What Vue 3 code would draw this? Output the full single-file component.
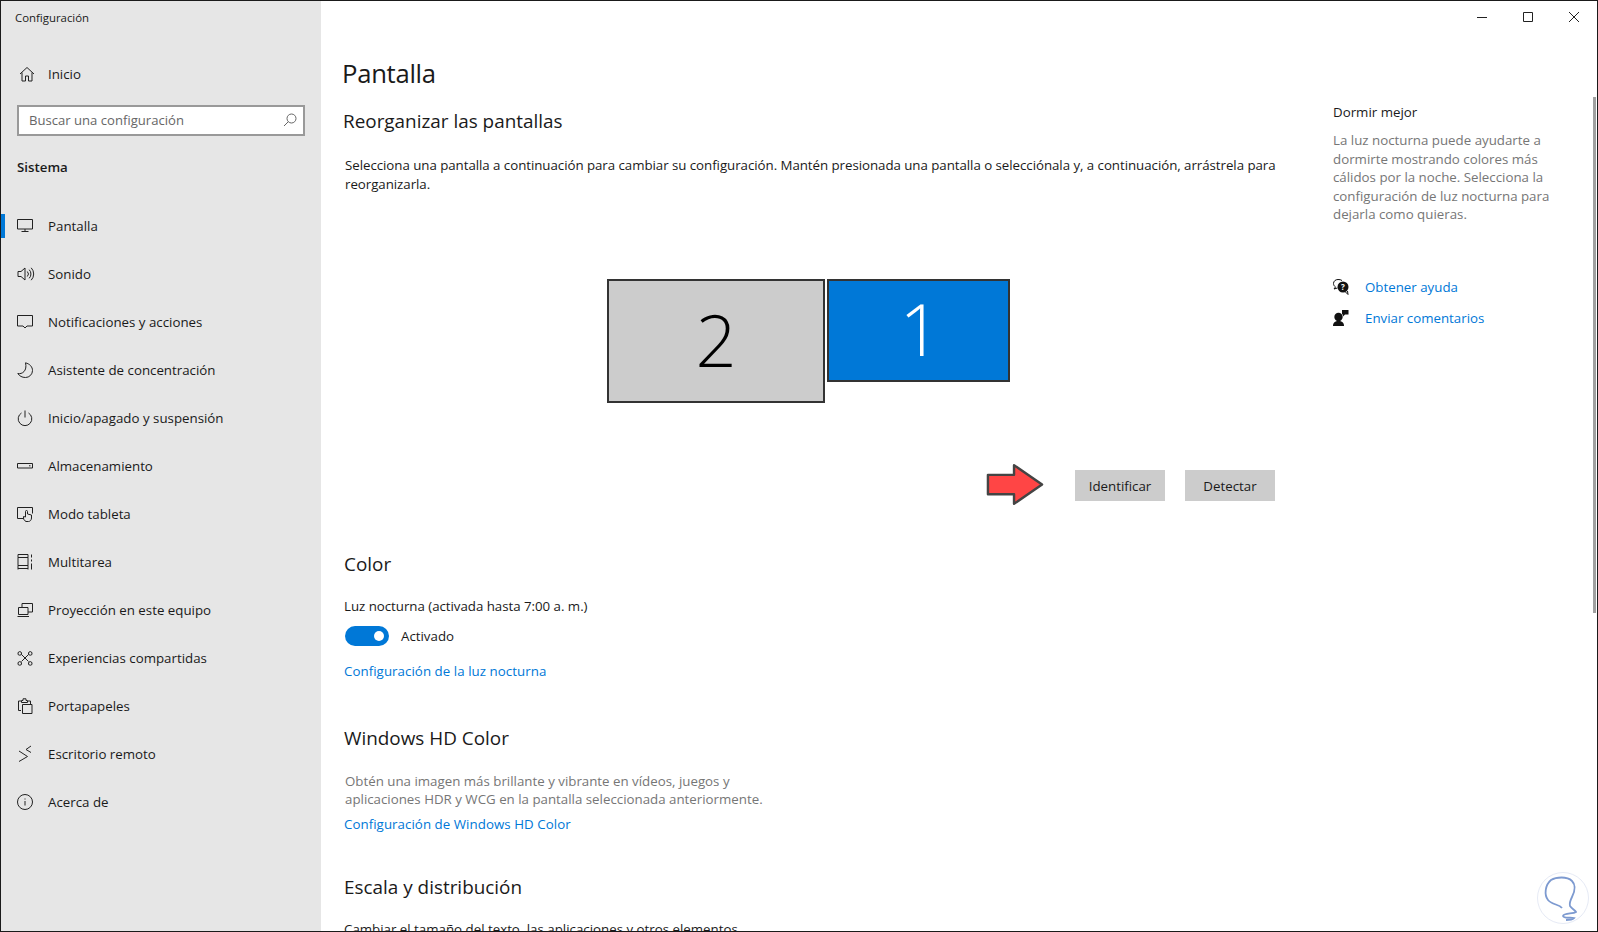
<script setup>
const items = [
  { label: 'Pantalla', active: true, d: 'M.5 1.5h15v9.5H.5z M8 11v2.5 M4.5 13.5h7' },
  { label: 'Sonido', d: 'M1 5.5h3L8 2v12l-4-3.5H1z M10.3 5.5a3.6 3.6 0 0 1 0 5 M12.2 3.7a6.2 6.2 0 0 1 0 8.6 M14.2 1.8a9 9 0 0 1 0 12.4' },
  { label: 'Notificaciones y acciones', d: 'M.5 1.5h15v10.5H10l-2 2-2-2H.5z' },
  { label: 'Asistente de concentración', d: 'M8.5.8C13 2 15.5 5 15.5 8.5a7 7 0 0 1-7 7C5 15.500 2.500 14 .8 11.500 5 12.500 10.500 9 8.500.8z' },
  { label: 'Inicio/apagado y suspensión', d: 'M8 .5v7 M4.500 3a6.800 6.800 0 1 0 7 0' },
  { label: 'Almacenamiento', d: 'M.5 5.500h15v4.500H.5z M12 7.800h1.500' },
  { label: 'Modo tableta', d: 'M6.500 12.500H.5V1.500h15v6 M9 15.500c-1.500-.8-2.500-2-2.500-3.500v-1.500l2 .5V5.500a1 1 0 0 1 2 0V8l4 1v3c0 2-1.500 3.500-3 3.500z' },
  { label: 'Multitarea', d: 'M1 .5h10 M1 3.500h10v8H1z M1 14.500h10 M1 11.500v4 M11 11.500v4 M1 .5v3 M11 .5v3 M14.500.5v3 M14.500 5.500v2 M14.500 9.500v6' },
  { label: 'Proyección en este equipo', d: 'M5 5V1.500h10.500V10H11 M1.500 5.500H11v7H1.500z M.5 14.500h11.500' },
  { label: 'Experiencias compartidas', d: 'M4.500 4.500l7 7 M11.500 4.500l-7 7 M4.500 3a1.800 1.800 0 1 1-3.500 0 1.800 1.800 0 0 1 3.500 0z M15 3a1.800 1.800 0 1 1-3.500 0 1.800 1.800 0 0 1 3.500 0z M4.500 13a1.800 1.800 0 1 1-3.500 0 1.800 1.800 0 0 1 3.500 0z M15 13a1.800 1.800 0 1 1-3.500 0 1.800 1.800 0 0 1 3.500 0z' },
  { label: 'Portapapeles', d: 'M4 12.500H1.500V3H4 M11 3h2.500v3 M4.500 4.500V2.500H6V.8h3v1.700h1.500v2z M5.500 6.500h9.500v9H5.500z' },
  { label: 'Escritorio remoto', d: 'M2 5l8.500 5.500L2 15.500 M14 0L9 3.500 14 6.500' },
  { label: 'Acerca de', d: 'M15.500 8a7.500 7.500 0 1 1-15 0 7.500 7.500 0 0 1 15 0z M8 7v4.500 M8 4.500v1' },
];
const monitors = [
  { n: 2, cls: 'mon-two' },
  { n: 1, cls: 'mon-one' },
];
</script>

<template>
  <div class="window">
    <aside class="side">
      <div class="app-title">Configuración</div>
      <div class="row home">
        <svg class="ico" viewBox="0 0 16 16"><path d="M1 8l7-6.500L15 8 M3 6.500v8.500h3.500v-5h3v5H13V6.500" /></svg>
        <span class="lab">Inicio</span>
      </div>
      <div class="search">
        <span>Buscar una configuración</span>
        <svg class="sico" viewBox="0 0 14 14"><path d="M13 5.500a4.500 4.500 0 1 1-9 0 4.500 4.500 0 0 1 9 0z M5.300 8.700L1 13" /></svg>
      </div>
      <div class="sys">Sistema</div>
      <nav class="nav">
        <div v-for="it in items" :key="it.label" class="row" :class="{ active: it.active }">
          <svg class="ico" viewBox="0 0 16 16"><path :d="it.d" /></svg>
          <span class="lab">{{ it.label }}</span>
        </div>
      </nav>
    </aside>

    <main class="main">
      <div class="controls">
        <svg viewBox="0 0 12 12"><path d="M1 6.500h10" /></svg>
        <svg viewBox="0 0 12 12"><path d="M1.500 1.500h9v9h-9z" /></svg>
        <svg viewBox="0 0 12 12"><path d="M1 1l10 10 M11 1L1 11" /></svg>
      </div>
      <div class="body">
        <section class="content">
          <h1>Pantalla</h1>
          <h2 class="h-reorg">Reorganizar las pantallas</h2>
          <p class="intro">Selecciona una pantalla a continuación para cambiar su configuración. Mantén presionada una pantalla o selecciónala y, a continuación, arrástrela para<br />reorganizarla.</p>
          <div class="monitors">
            <div v-for="m in monitors" :key="m.n" class="mon" :class="m.cls">{{ m.n }}</div>
          </div>
          <div class="btns">
            <svg class="arrow" viewBox="0 0 60 44"><path d="M2 12h27V2l29 20-29 20V32H2z" /></svg>
            <button class="btn">Identificar</button>
            <button class="btn">Detectar</button>
          </div>
          <h2 class="h-color">Color</h2>
          <div class="night">Luz nocturna (activada hasta 7:00 a. m.)</div>
          <div class="toggle-row">
            <span class="toggle"><i></i></span>
            <span>Activado</span>
          </div>
          <a class="link link-night">Configuración de la luz nocturna</a>
          <h2 class="h-hd">Windows HD Color</h2>
          <p class="hd-text">Obtén una imagen más brillante y vibrante en vídeos, juegos y<br />aplicaciones HDR y WCG en la pantalla seleccionada anteriormente.</p>
          <a class="link link-hd">Configuración de Windows HD Color</a>
          <h2 class="h-scale">Escala y distribución</h2>
          <div class="scale-text">Cambiar el tamaño del texto, las aplicaciones y otros elementos</div>
        </section>
        <aside class="help">
          <div class="help-title">Dormir mejor</div>
          <p class="help-text">La luz nocturna puede ayudarte a dormirte mostrando colores más cálidos por la noche. Selecciona la configuración de luz nocturna para dejarla como quieras.</p>
          <div class="help-links">
            <div class="hl">
              <svg viewBox="0 0 16 16" class="hico">
                <path class="ol" d="M9 1.500C8 .7 6.500.5 5 .5 2.500.5.500 2.200.5 4.500c0 1.500.8 2.700 2 3.400L1 10l3.500-1" />
                <circle cx="10" cy="8" r="5.500" />
                <path class="ol" d="M12.500 13l2.500 2.500-.5-3.500" />
                <text x="10" y="11" class="q">?</text>
              </svg>
              <a class="link">Obtener ayuda</a>
            </div>
            <div class="hl">
              <svg viewBox="0 0 16 16" class="hico">
                <circle cx="5.500" cy="7" r="4.200" />
                <path d="M0 16c0-3.500 2-5 5.500-5s5.500 1.500 5.500 5z" />
                <path d="M9 0h6.500v4.500H12L10 6.500V4.500H9z" />
              </svg>
              <a class="link">Enviar comentarios</a>
            </div>
          </div>
        </aside>
      </div>
      <div class="scrollbar"></div>
      <svg class="mark" viewBox="0 0 52 52">
        <circle class="mark-ring" cx="26" cy="26" r="25.500" />
        <path class="mark-bulb" d="M25 36C22 32 15 33 11 28 7 23 8 13 14 8 19 5 30 4 35 9 40 14 37 21 35 25 33 29 32 31 33 34 35 37 38 38 39 40 36 42 27 41 26 44 27 47 33 45 37 46 35 48 31 48 29 48" />
      </svg>
    </main>
  </div>
</template>

<style>
html, body { margin: 0; background: #fff; }
</style>

<style scoped>
.window {
  box-sizing: border-box;
  width: 1598px;
  height: 932px;
  display: flex;
  overflow: hidden;
  position: relative;
  border: 1px solid #1a1a1a;
  background: #fff;
  color: #1a1a1a;
  font-family: "Open Sans", "Noto Sans", sans-serif;
  font-size: 13.3px;
}
.side {
  width: 320px;
  flex: none;
  background: #e6e6e6;
  box-sizing: border-box;
}
.app-title {
  height: 49px;
  padding: 9px 0 0 14px;
  box-sizing: border-box;
  font-size: 11.4px;
  line-height: 16px;
}
.row {
  height: 48px;
  display: flex;
  align-items: center;
  padding-left: 16px;
  position: relative;
}
.row.active::before {
  content: "";
  position: absolute;
  left: 0;
  top: 12px;
  width: 4px;
  height: 24px;
  background: #0078d7;
}
.ico {
  width: 16px;
  height: 16px;
  flex: none;
  overflow: visible;
}
.ico path {
  fill: none;
  stroke: #222;
  stroke-width: 1;
}
.lab {
  margin-left: 15px;
  white-space: nowrap;
}
.home .ico { margin-left: 2px; }
.home .lab { margin-left: 13px; }
.search {
  box-sizing: border-box;
  margin: 7px 0 0 16px;
  width: 288px;
  height: 31px;
  border: 2px solid #999;
  background: #fff;
  color: #666;
  font-size: 13.1px;
  display: flex;
  align-items: center;
  justify-content: space-between;
  padding: 0 6px 2px 10px;
}
.sico {
  width: 14px;
  height: 14px;
  fill: none;
  stroke: #666;
}
.sys {
  margin: 16px 0 0 16px;
  height: 30px;
  line-height: 30px;
  font-weight: 600;
}
.nav { margin-top: 20px; }
.main {
  flex: 1;
  min-width: 0;
  position: relative;
  display: flex;
  flex-direction: column;
}
.controls {
  height: 34px;
  flex: none;
  display: flex;
  justify-content: flex-end;
  align-items: center;
  gap: 34px;
  padding-right: 17px;
  box-sizing: border-box;
  padding-bottom: 2px;
}
.controls svg {
  width: 12px;
  height: 12px;
  fill: none;
  stroke: #222;
}
.body {
  display: flex;
  flex: 1;
  min-height: 0;
}
.content {
  width: 932px;
  margin-left: 22px;
  flex: none;
}
h1 {
  margin: 19px 0 0 -1px;
  font-size: 25.7px;
  font-weight: 400;
  line-height: 40px;
  letter-spacing: -0.3px;
}
h2 {
  margin: 0;
  font-size: 18.9px;
  font-weight: 400;
  line-height: 28px;
}
.h-reorg { margin-top: 13px; }
.intro {
  margin: 21px 0 0 2px;
  line-height: 19px;
  letter-spacing: -0.045px;
  white-space: nowrap;
}
.monitors {
  display: flex;
  gap: 2px;
  margin: 85px 0 0 264px;
  height: 124px;
  align-items: flex-start;
}
.mon {
  box-sizing: border-box;
  border: 2px solid #333;
  display: flex;
  align-items: center;
  justify-content: center;
  font-size: 72px;
  font-weight: 300;
  line-height: 1;
  padding-bottom: 4px;
}
.mon-two {
  width: 218px;
  height: 124px;
  background: #ccc;
  color: #000;
}
.mon-one {
  width: 183px;
  height: 103px;
  background: #0078d7;
  color: #fff;
  padding-left: 3px;
  padding-bottom: 6px;
}
.btns {
  position: relative;
  margin-top: 67px;
  display: flex;
  justify-content: flex-end;
  gap: 20px;
}
.btn {
  width: 90px;
  height: 31px;
  border: 0;
  padding: 0;
  background: #ccc;
  color: #1a1a1a;
  font: inherit;
}
.arrow {
  position: absolute;
  left: 643px;
  top: -7px;
  width: 58px;
  height: 43px;
  overflow: visible;
}
.arrow path {
  fill: #ff4545;
  stroke: #444;
  stroke-width: 2.500;
  stroke-linejoin: round;
}
.h-color { margin: 49px 0 0 1px; }
.night { margin: 18px 0 0 1px; line-height: 20px; letter-spacing: -0.03px; }
.toggle-row {
  margin: 9px 0 0 2px;
  display: flex;
  align-items: center;
  gap: 12px;
  height: 21px;
}
.toggle {
  width: 44px;
  height: 20px;
  border-radius: 10px;
  background: #0078d7;
  display: flex;
  align-items: center;
  justify-content: flex-end;
  padding-right: 5px;
  box-sizing: border-box;
}
.toggle i {
  width: 10px;
  height: 10px;
  border-radius: 50%;
  background: #fff;
}
.link {
  color: #0078d7;
  line-height: 20px;
}
.link-night, .link-hd {
  display: block;
  margin-left: 1px;
  letter-spacing: 0.05px;
}
.link-night { margin-top: 15px; }
.h-hd { margin: 43px 0 0 1px; }
.hd-text {
  margin: 20px 0 0 2px;
  line-height: 18px;
  color: #767676;
}
.link-hd { margin-top: 6px; }
.h-scale { margin: 39px 0 0 1px; }
.scale-text {
  margin: 18px 0 0 1px;
  line-height: 20px;
  white-space: nowrap;
}
.help {
  margin-left: 58px;
  padding-top: 67px;
  width: 225px;
}
.help-title { line-height: 20px; }
.help-text {
  margin: 9px 0 0;
  line-height: 18.5px;
  color: #767676;
}
.help-links { margin-top: 48px; }
.hl {
  height: 31px;
  display: flex;
  align-items: center;
  gap: 16px;
}
.hico {
  width: 16px;
  height: 16px;
  flex: none;
}
.hico circle, .hico path { fill: #111; }
.hico .ol {
  fill: none;
  stroke: #111;
}
.q {
  fill: #fff;
  font-size: 8px;
  font-weight: 700;
  text-anchor: middle;
}
.scrollbar {
  position: absolute;
  right: 1px;
  top: 96px;
  width: 3px;
  height: 516px;
  background: #a0a0a0;
}
.mark {
  position: absolute;
  right: 8px;
  top: 871px;
  width: 52px;
  height: 52px;
}
.mark-ring {
  fill: none;
  stroke: #e6eaf5;
}
.mark-bulb {
  fill: none;
  stroke: #7d9ad0;
  stroke-width: 1.800;
}
</style>
